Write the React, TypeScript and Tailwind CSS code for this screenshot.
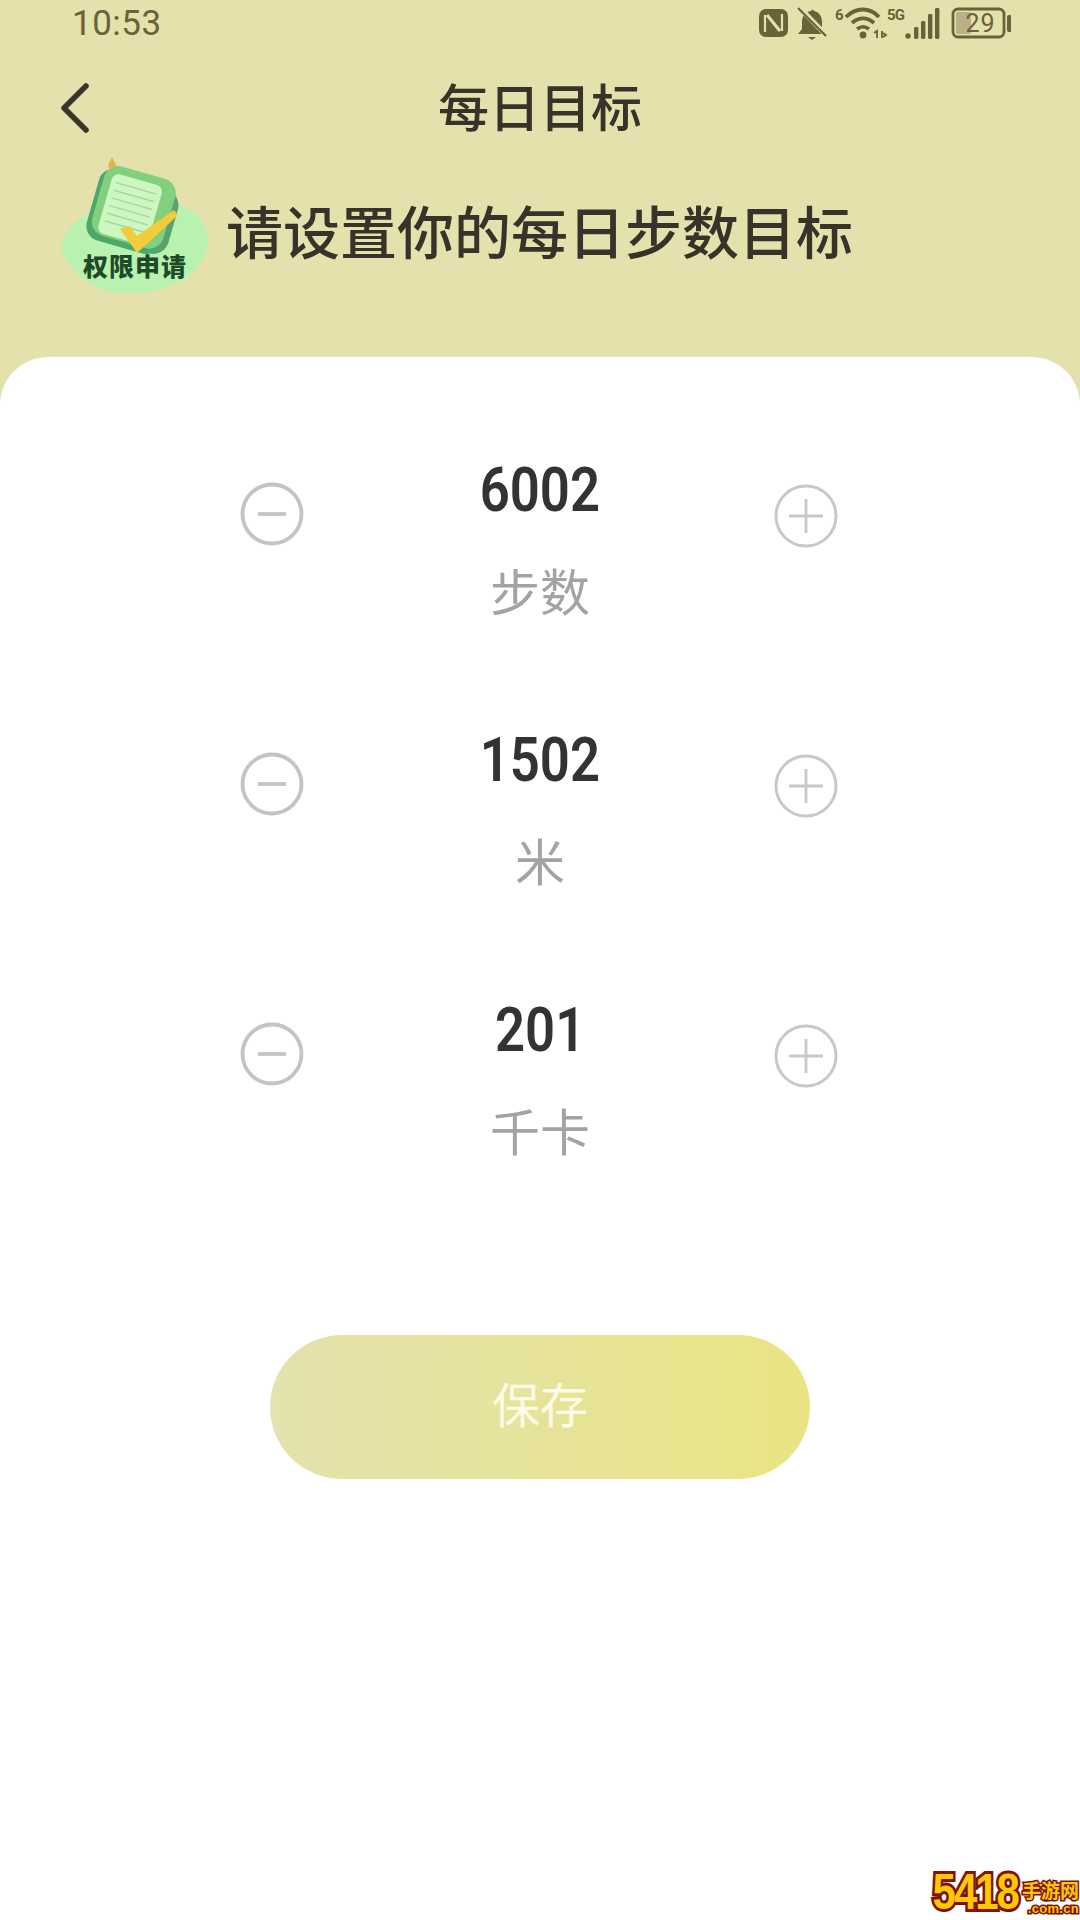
import React from "react";

const cjk = "font-['Noto_Sans_CJK_SC','Noto_Sans',sans-serif]";

function StatusIcons() {
  const c = "#6a6238";
  return (
    <svg width="260" height="48" viewBox="0 0 260 48" className="block" fill="none">
      {/* NFC */}
      <rect x="8" y="9" width="29" height="28" rx="7" fill={c} />
      <path d="M14 32V15M31 31V14" stroke="#e5e1ac" strokeWidth="2.2" />
      <path d="M16 15l13 16" stroke="#e5e1ac" strokeWidth="3" />
      {/* muted bell */}
      <path d="M60 11c-6 1-9 5-9 11v7l-4 5h28l-4-5v-7c0-6-3-10-8-11-1-2-2-2-3 0z" fill={c} />
      <path d="M57 37h8l-4 3z" fill={c} />
      <path d="M49 8l26 27" stroke="#e5e1ac" strokeWidth="5" />
      <path d="M47 8l28 28" stroke={c} strokeWidth="2.2" />
      {/* wifi */}
      <text x="84" y="20" fontSize="15" fontWeight="700" fill={c} fontFamily="Roboto, sans-serif">6</text>
      <path d="M95 17c10-10 24-10 33 0" stroke={c} strokeWidth="3.8" />
      <path d="M101 23c7-6 15-6 22 0" stroke={c} strokeWidth="3.8" />
      <path d="M106 29c4-3 8-3 12 0" stroke={c} strokeWidth="3.6" />
      <circle cx="112" cy="35" r="3.4" fill={c} />
      <path d="M123 33l3-2v7M131 31v7M132 33l3 2-3 2" stroke={c} strokeWidth="1.8" />
      {/* 5G */}
      <text x="136" y="20" fontSize="15" fontWeight="700" fill={c} fontFamily="Roboto, sans-serif" textLength="18">5G</text>
      {/* signal */}
      <circle cx="157" cy="36" r="2.7" fill={c} />
      <rect x="163" y="27" width="4.4" height="12" rx="1.4" fill={c} />
      <rect x="170" y="21" width="4.4" height="18" rx="1.4" fill={c} />
      <rect x="177" y="14" width="4.4" height="25" rx="1.4" fill={c} />
      <rect x="184" y="8" width="4.4" height="31" rx="1.4" fill={c} />
      {/* battery */}
      <rect x="202" y="9" width="51" height="28" rx="5" stroke={c} strokeWidth="2.8" />
      <rect x="205" y="12" width="15" height="22" rx="1.5" fill="#b8b186" />
      <rect x="256" y="15" width="5" height="17" rx="2" fill={c} />
      <text x="229" y="32" textAnchor="middle" fontSize="25" fill={c} fontFamily="Roboto, sans-serif" fontWeight="400" textLength="29">29</text>
    </svg>
  );
}

function BadgeIcon() {
  return (
    <div className="relative h-[140px] w-[150px] shrink-0">
      <svg width="150" height="140" viewBox="0 0 150 140" className="block overflow-visible">
        <path d="M2 84C6 66 22 52 40 48l74-6c18 4 33 18 34 36 0 16-9 30-24 40-18 11-44 16-66 14-20-2-38-12-48-28C4 96 1 92 2 84z" fill="#b9f2b0" />
        <path d="M52-4l7 14-6 3-5-8z" fill="#e9b23e" />
        <g transform="rotate(16 72 49)">
          <rect x="40" y="20" width="76" height="66" rx="16" fill="#5c9f70" />
          <rect x="32" y="14" width="76" height="74" rx="15" fill="#4ba868" />
          <rect x="36" y="10" width="74" height="72" rx="15" fill="#82cf7e" />
          <rect x="44" y="18" width="52" height="62" rx="7" fill="#cdf6c0" />
          <path d="M49 27h42M49 35h42M49 43h42M49 51h42M49 59h42M49 67h42" stroke="#a6d8a0" strokeWidth="1.4" />
        </g>
        <path d="M60 68l10-3 7 10 37-26 4 5-41 38z" fill="#f4cb3a" />
      </svg>
      <span className={`absolute left-[23px] top-[89px] whitespace-nowrap text-[25px] leading-[30px] font-black tracking-[1px] text-[#1f4a2a] ${cjk}`}>
        权限申请
      </span>
    </div>
  );
}

function MinusBtn() {
  return (
    <svg width="64" height="64" viewBox="0 0 64 64" className="block">
      <circle cx="32" cy="32" r="29.5" fill="none" stroke="#c4c4c4" strokeWidth="3.8" />
      <path d="M18 32h28" stroke="#c4c4c4" strokeWidth="3.8" />
    </svg>
  );
}

function PlusBtn() {
  return (
    <svg width="64" height="64" viewBox="0 0 64 64" className="block">
      <circle cx="32" cy="32" r="30" fill="none" stroke="#c8c8c8" strokeWidth="3" />
      <path d="M15 32h34M32 15v34" stroke="#c8c8c8" strokeWidth="2.8" />
    </svg>
  );
}

function GoalRow({ value, label }: { value: string; label: string }) {
  return (
    <div className="grid h-[270px] grid-cols-[1fr_auto_1fr] items-start">
      <div className="mt-[32px] justify-self-start">
        <MinusBtn />
      </div>
      <div className="flex flex-col items-center pt-[9px]">
        <div className="h-[62px] origin-center scale-x-[0.85] font-['Roboto',sans-serif] text-[62px] leading-[62px] font-semibold text-[#333333]">
          {value}
        </div>
        <div className={`mt-[38px] text-[50px] leading-[60px] text-[#a3a3a3] ${cjk}`}>{label}</div>
      </div>
      <div className="mt-[34px] mr-[2px] justify-self-end">
        <PlusBtn />
      </div>
    </div>
  );
}

export default function App() {
  return (
    <div className={`relative flex h-[1920px] w-[1080px] flex-col overflow-hidden bg-[#e5e1ac] ${cjk}`}>
      <div className="flex h-[48px] items-center justify-between pr-[69px] pl-[72px]">
        <span className="font-['Roboto',sans-serif] text-[35px] leading-[48px] tracking-[0.5px] text-[#6a6238]">10:53</span>
        <StatusIcons />
      </div>

      <div className="relative flex h-[118px] items-center justify-center pb-[4px]">
        <svg width="32" height="52" viewBox="0 0 32 52" className="absolute top-[35px] left-[59px]" fill="none">
          <path d="M27 3L5 25l22 22" stroke="#3a342a" strokeWidth="5.5" strokeLinecap="round" strokeLinejoin="round" />
        </svg>
        <span className="text-[51px] leading-[60px] font-medium text-[#38332a]">每日目标</span>
      </div>

      <div className="flex h-[191px] items-start pl-[60px]">
        <div className="-mt-[5px]">
          <BadgeIcon />
        </div>
        <span className="mt-[27px] ml-[16px] text-[57px] leading-[72px] font-medium whitespace-nowrap text-[#38332a]">
          请设置你的每日步数目标
        </span>
      </div>

      <div className="flex flex-1 flex-col rounded-t-[48px] bg-white pt-[93px]">
        <div className="mx-[240px]">
          <GoalRow value="6002" label="步数" />
          <GoalRow value="1502" label="米" />
          <GoalRow value="201" label="千卡" />
        </div>
        <div className="mx-[270px] mt-[75px] flex h-[144px] items-center justify-center rounded-full bg-gradient-to-r from-[#e4e2ae] to-[#e9e583] pb-[10px]">
          <span className="text-[48px] leading-[60px] font-normal text-[#fbfbe8]">保存</span>
        </div>
      </div>

      <div className="absolute right-0 bottom-[4px] flex items-end pr-[1px]">
        <span className="origin-center scale-y-[1.2] font-['Liberation_Sans',sans-serif] text-[42px] leading-[48px] font-black tracking-[-2px] text-[#fcc800] [paint-order:stroke] [-webkit-text-stroke:5px_#7e1208]">
          5418
        </span>
        <div className="ml-[4px] flex flex-col items-end">
          <span className="text-[19px] leading-[22px] font-bold whitespace-nowrap text-[#fcc800] [paint-order:stroke] [-webkit-text-stroke:3px_#7e1208]">手游网</span>
          <span className="font-['Liberation_Sans',sans-serif] text-[13px] leading-[15px] font-bold tracking-[0.3px] whitespace-nowrap text-[#fcc800] [paint-order:stroke] [-webkit-text-stroke:3px_#7e1208]">.com.cn</span>
        </div>
      </div>
    </div>
  );
}
